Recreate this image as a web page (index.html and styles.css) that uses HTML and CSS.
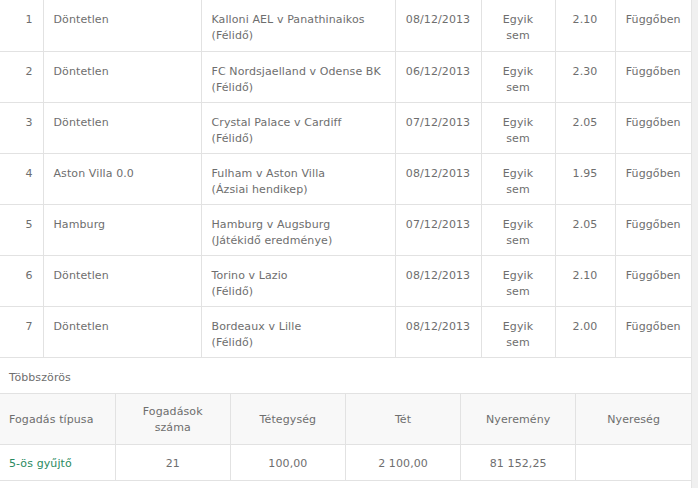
FILE: index.html
```html
<!DOCTYPE html>
<html>
<head>
<meta charset="utf-8">
<link rel="stylesheet" href="styles.css">
</head>
<body>
<div class="page">
  <div class="main">
    <table class="sel">
      <colgroup>
        <col class="c-no"><col class="c-pick"><col class="c-match"><col class="c-date"><col class="c-egy"><col class="c-odds"><col class="c-st">
      </colgroup>
      <tbody>
        <tr><td class="no">1</td><td>Döntetlen</td><td>Kalloni AEL v Panathinaikos<br>(Félidő)</td><td class="ctr">08/12/2013</td><td class="ctr">Egyik<br>sem</td><td class="ctr">2.10</td><td class="ctr">Függőben</td></tr>
        <tr><td class="no">2</td><td>Döntetlen</td><td>FC Nordsjaelland v Odense BK<br>(Félidő)</td><td class="ctr">06/12/2013</td><td class="ctr">Egyik<br>sem</td><td class="ctr">2.30</td><td class="ctr">Függőben</td></tr>
        <tr><td class="no">3</td><td>Döntetlen</td><td>Crystal Palace v Cardiff<br>(Félidő)</td><td class="ctr">07/12/2013</td><td class="ctr">Egyik<br>sem</td><td class="ctr">2.05</td><td class="ctr">Függőben</td></tr>
        <tr><td class="no">4</td><td>Aston Villa 0.0</td><td>Fulham v Aston Villa<br>(Ázsiai hendikep)</td><td class="ctr">08/12/2013</td><td class="ctr">Egyik<br>sem</td><td class="ctr">1.95</td><td class="ctr">Függőben</td></tr>
        <tr><td class="no">5</td><td>Hamburg</td><td>Hamburg v Augsburg<br>(Játékidő eredménye)</td><td class="ctr">07/12/2013</td><td class="ctr">Egyik<br>sem</td><td class="ctr">2.05</td><td class="ctr">Függőben</td></tr>
        <tr><td class="no">6</td><td>Döntetlen</td><td>Torino v Lazio<br>(Félidő)</td><td class="ctr">08/12/2013</td><td class="ctr">Egyik<br>sem</td><td class="ctr">2.10</td><td class="ctr">Függőben</td></tr>
        <tr><td class="no">7</td><td>Döntetlen</td><td>Bordeaux v Lille<br>(Félidő)</td><td class="ctr">08/12/2013</td><td class="ctr">Egyik<br>sem</td><td class="ctr">2.00</td><td class="ctr">Függőben</td></tr>
      </tbody>
    </table>
    <div class="section-title">Többszörös</div>
    <table class="multi">
      <thead>
        <tr><th class="left">Fogadás típusa</th><th>Fogadások<br>száma</th><th>Tétegység</th><th>Tét</th><th>Nyeremény</th><th>Nyereség</th></tr>
      </thead>
      <tbody>
        <tr><td class="left green">5-ös gyűjtő</td><td>21</td><td>100,00</td><td>2 100,00</td><td>81 152,25</td><td></td></tr>
      </tbody>
    </table>
  </div>
  <div class="strip"></div>
</div>
</body>
</html>
```
FILE: styles.css
```css
html, body {
  margin: 0;
  padding: 0;
  background: #fff;
}
body {
  font-family: "DejaVu Sans", Verdana, sans-serif;
  font-size: 11px;
  letter-spacing: 0.1px;
  color: #6e6e6e;
}
.page {
  display: flex;
  height: 488px;
  overflow: hidden;
}
.main {
  width: 691px;
  flex: none;
}
.strip {
  flex: 1;
  background: #f0f0f0;
  border-left: 1px solid #e4e4e4;
}
table {
  border-collapse: collapse;
  table-layout: fixed;
  width: 691px;
}
.c-no { width: 43px; }
.c-pick { width: 158px; }
.c-match { width: 194px; }
.c-date { width: 86px; }
.c-egy { width: 74px; }
.c-odds { width: 60px; }
.c-st { width: 76px; }
.sel td {
  height: 51px;
  padding: 12px 10px 0;
  vertical-align: top;
  line-height: 16px;
  border-bottom: 1px solid #e2e2e2;
  border-left: 1px solid #e2e2e2;
  box-sizing: border-box;
  white-space: nowrap;
}
.sel td:first-child { border-left: none; }
.sel td.no { text-align: right; }
.sel td.ctr { text-align: center; padding-left: 2px; padding-right: 2px; }
.section-title {
  height: 36px;
  padding-left: 9px;
  line-height: 39px;
  border-bottom: 1px solid #e2e2e2;
  box-sizing: border-box;
}
.multi th, .multi td {
  border-left: 1px solid #e2e2e2;
  border-bottom: 1px solid #e2e2e2;
  text-align: center;
  font-weight: normal;
  padding: 0 9px;
  line-height: 16px;
}
.multi th:first-child, .multi td:first-child { border-left: none; }
.multi th {
  height: 51px;
  padding-top: 3px;
  background: #f8f8f8;
  box-sizing: border-box;
}
.multi td {
  height: 36px;
  padding-top: 2px;
  box-sizing: border-box;
}
.multi .left { text-align: left; }
.multi .green { color: #2a8a60; }
```
